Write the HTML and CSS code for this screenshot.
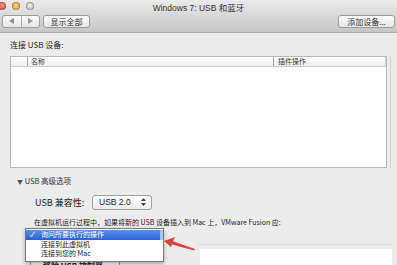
FILE: index.html
```html
<!DOCTYPE html>
<html lang="zh">

<head>
    <title>Windows 7: USB 和蓝牙</title>
    <link rel="stylesheet" href="styles.css">
</head>

<body>
    <div class="window">
        <header class="toolbar">
            <div class="titlebar">
                <div class="lights">
                    <span class="light red"></span>
                    <span class="light yellow"></span>
                    <span class="light gray"></span>
                </div>
                <div class="title">Windows 7: USB 和蓝牙</div>
            </div>
            <div class="tools">
                <div class="nav">
                    <span class="nav-half"><svg width="5" height="6" viewBox="0 0 5 6"><path d="M0 3 L5 0 L5 6 Z" fill="#8a8a8a"/></svg></span>
                    <span class="nav-half"><svg width="5" height="6" viewBox="0 0 5 6"><path d="M5 3 L0 0 L0 6 Z" fill="#9a9a9a"/></svg></span>
                </div>
                <button class="btn show-all">显示全部</button>
                <button class="btn add">添加设备...</button>
            </div>
        </header>

        <main class="content">
            <div class="label">连接 USB 设备:</div>

            <div class="table-frame">
                <div class="table">
                    <div class="table-head">
                        <span class="col-check"></span>
                        <span class="col-name">名称</span>
                        <span class="col-plugin">插件操作</span>
                    </div>
                </div>
            </div>

            <div class="disclosure"><span class="tri">▼</span> USB 高级选项</div>

            <div class="compat">
                <span class="compat-label">USB 兼容性:</span>
                <div class="select">
                    <span>USB 2.0</span>
                    <svg width="5" height="8" viewBox="0 0 5 8"><path d="M2.5 0 L5 3 L0 3 Z M2.5 8 L5 5 L0 5 Z" fill="#444"/></svg>
                </div>
            </div>

            <p class="hint">在虚拟机运行过程中，如果将新的 USB 设备插入到 Mac 上，VMware Fusion 应:</p>

            <div class="bottom">
                <button class="btn remove">移除 USB 控制器</button>
                <div class="bottom-right">
                    <div class="white-box"></div>
                </div>
            </div>

            <ul class="menu">
                <li class="selected"><span class="check">✓</span>询问所要执行的操作</li>
                <li>连接到此虚拟机</li>
                <li>连接到您的 Mac</li>
            </ul>

            <svg class="arrow" width="34" height="16" viewBox="0 0 34 16">
                <path d="M0 4 L11 0 L9 4.3 L31 12 L30 13.5 L8 7.5 L7 10 Z" fill="#d9463c"/>
            </svg>
        </main>
    </div>
</body>

</html>
```

FILE: styles.css
```css
body,
html {
    margin: 0;
    padding: 0;
    width: 397px;
    height: 265px;
    overflow: hidden;
    background-color: #ececec;
    font-family: "Noto Sans CJK SC", "Liberation Sans", sans-serif;
    color: #222;
}

.window {
    display: flex;
    flex-direction: column;
    height: 100%;
}

/* title + toolbar */
.toolbar {
    height: 32px;
    flex-shrink: 0;
    border-bottom: 1px solid #a9a9a9;
    background: linear-gradient(#ebebeb, #d8d8d8 50%, #c6c6c6);
    display: flex;
    flex-direction: column;
}

.titlebar {
    height: 13px;
    display: grid;
    grid-template-columns: 1fr auto 1fr;
    align-items: center;
}

.lights {
    display: flex;
    gap: 6px;
    margin-left: -2px;
    margin-top: -2px;
}

.light {
    width: 8px;
    height: 8px;
    border-radius: 50%;
    box-sizing: border-box;
    border: 1px solid rgba(0, 0, 0, 0.25);
}

.red {
    background: radial-gradient(circle at 50% 35%, #f79a8e, #d8483a);
}

.yellow {
    background: radial-gradient(circle at 50% 35%, #f8dc8a, #dca32e);
}

.gray {
    background: radial-gradient(circle at 50% 35%, #f2f2f2, #b8b8b8);
}

.title {
    font-family: "Liberation Sans", "Noto Sans CJK SC", sans-serif;
    font-size: 8.5px;
    color: #333;
    padding-top: 1px;
}

.tools {
    display: flex;
    align-items: center;
    padding: 1px 2px 0 2px;
    height: 14px;
}

.nav {
    display: flex;
    width: 38px;
    height: 13px;
    box-sizing: border-box;
    border: 1px solid #9c9c9c;
    border-radius: 3px;
    background: linear-gradient(#fdfdfd, #e6e6e6);
}

.nav-half {
    flex: 1;
    display: flex;
    align-items: center;
    justify-content: center;
}

.nav-half + .nav-half {
    border-left: 1px solid #b0b0b0;
}

.btn {
    font-family: "Noto Sans CJK SC", sans-serif;
    font-size: 8px;
    color: #333;
    height: 13px;
    line-height: 11px;
    padding: 0 6px;
    box-sizing: border-box;
    border: 1px solid #9c9c9c;
    border-radius: 3px;
    background: linear-gradient(#fdfdfd, #e4e4e4);
}

.show-all {
    margin-left: 3px;
    width: 47px;
}

.add {
    margin-left: auto;
    width: 57px;
}

/* content */
.content {
    position: relative;
    flex: 1;
    padding: 6px 0 0 10px;
}

.label {
    font-size: 8px;
    line-height: 11px;
    color: #222;
}

.table-frame {
    margin-top: 6px;
    width: 381px;
    box-sizing: border-box;
    border-right: 1px solid #d2d2d2;
    padding-right: 3px;
}

.table {
    height: 112px;
    box-sizing: border-box;
    border: 1px solid #b8b8b8;
    background: white;
}

.table-head {
    display: flex;
    height: 10px;
    box-sizing: border-box;
    border-bottom: 1px solid #cfcfcf;
    background: linear-gradient(#ffffff, #ececec);
    font-size: 7px;
    line-height: 9px;
    color: #333;
}

.col-check {
    width: 16px;
}

.col-name {
    width: 246px;
    border-left: 1px solid #a8a8a8;
    padding-left: 3px;
    box-sizing: border-box;
}

.col-plugin {
    flex: 1;
    border-left: 1px solid #a8a8a8;
    border-right: 1px solid #d0d0d0;
    padding-left: 4px;
}

.disclosure {
    margin-top: 8px;
    margin-left: 7px;
    font-size: 7.5px;
    line-height: 10px;
    color: #333;
}

.tri {
    font-size: 6px;
    color: #555;
}

.compat {
    margin-top: 7px;
    margin-left: 25px;
    display: flex;
    align-items: center;
    height: 16px;
}

.compat-label {
    width: 57px;
    font-size: 9px;
    color: #222;
}

.select {
    width: 60px;
    height: 15px;
    box-sizing: border-box;
    border: 1px solid #a0a0a0;
    border-radius: 3px;
    background: linear-gradient(#ffffff, #ececec);
    display: flex;
    align-items: center;
    justify-content: space-between;
    padding: 0 5px 0 6px;
    font-family: "Liberation Sans", sans-serif;
    font-size: 8.5px;
    color: #222;
}

.hint {
    margin: 7px 0 0 24px;
    font-size: 7px;
    line-height: 10px;
    color: #222;
}

.bottom {
    display: flex;
    margin-top: 2px;
    height: 40px;
}

.remove {
    margin: 29px 0 0 20px;
    width: 90px;
    height: 15px;
    font-size: 8px;
    font-weight: bold;
    color: #222;
    text-align: left;
    padding-left: 12px;
}

.bottom-right {
    margin-left: auto;
    width: 192px;
    margin-right: 5px;
    border-top: 1px solid #dcdcdc;
    margin-top: 15px;
    padding: 4px 0 0 2px;
}

.white-box {
    height: 30px;
    background: white;
}

/* popup menu over the form */
.menu {
    position: absolute;
    left: 25px;
    top: 195px;
    width: 139px;
    margin: 0;
    padding: 1px 0 2px 0;
    list-style: none;
    box-sizing: border-box;
    background: white;
    border: 1px solid #7a7a7a;
    box-shadow: 0 2px 4px rgba(0, 0, 0, 0.3);
    font-size: 7px;
    line-height: 9.5px;
    color: #222;
}

.menu li {
    padding-left: 15px;
    position: relative;
}

.menu .selected {
    background: linear-gradient(#5b8fea, #2c5fd4);
    color: white;
    border-right: 3px solid #a9c2f0;
}

.check {
    position: absolute;
    left: 4px;
}

.arrow {
    position: absolute;
    left: 164px;
    top: 204px;
}
```
